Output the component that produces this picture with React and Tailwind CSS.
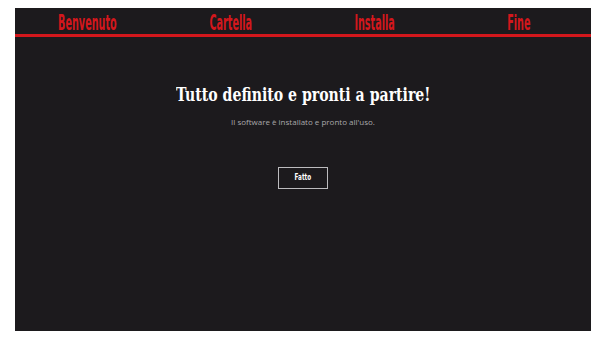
import React from 'react';

const steps = ['Benvenuto', 'Cartella', 'Installa', 'Fine'];

const App = () => {
  return (
    <div className="w-[600px] h-[346px] bg-white pt-2 pl-[15px] pr-[9px] overflow-hidden">
      <div className="h-[323px] bg-[#1c1a1d] flex flex-col">
        <nav className="grid grid-cols-4 h-[26px]">
          {steps.map((s) => (
            <div key={s} className="flex justify-center pt-[5px]">
              <span
                className="text-[#d3171c] text-[21px] leading-[21px] font-bold scale-x-[0.51] inline-block"
                style={{ fontFamily: '"Liberation Sans Narrow", "DejaVu Sans Condensed", sans-serif' }}
              >
                {s}
              </span>
            </div>
          ))}
        </nav>
        <div className="h-[3px] bg-[#d3171c]" />
        <div className="flex flex-col items-center pt-[47px]">
          <h1
            className="text-white text-[18px] leading-[22px] font-bold scale-x-[0.87]"
            style={{ fontFamily: '"DejaVu Serif Condensed", "DejaVu Serif", serif' }}
          >
            Tutto definito e pronti a partire!
          </h1>
          <p
            className="text-[#a9a8aa] text-[8px] leading-[10px] mt-[11px]"
            style={{ fontFamily: '"Open Sans", sans-serif' }}
          >
            Il software è installato e pronto all'uso.
          </p>
          <button className="mt-[40px] w-[50px] h-[22px] border border-[#bdbcbe] flex items-center justify-center">
            <span
              className="text-white text-[9px] font-bold scale-x-[0.7] inline-block"
              style={{ fontFamily: '"Liberation Sans Narrow", "DejaVu Sans Condensed", sans-serif' }}
            >
              Fatto
            </span>
          </button>
        </div>
      </div>
    </div>
  );
};

export default App;
